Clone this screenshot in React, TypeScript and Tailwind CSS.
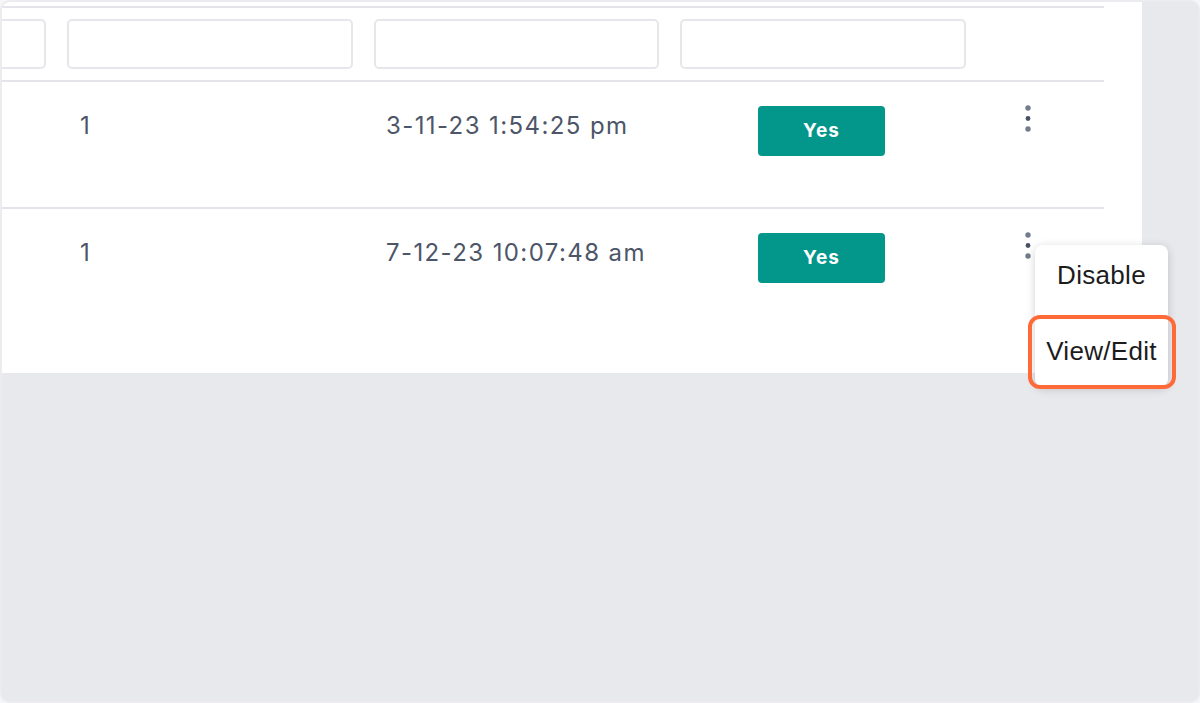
const cols = ['w-[55px]', 'w-[306px]', 'w-[307px]', 'w-[306px]', 'w-[128px]'];

const rows = [
  { count: '1', date: '3-11-23 1:54:25 pm', active: true, h: 'h-[127px]' },
  { count: '1', date: '7-12-23 10:07:48 am', active: true, h: 'h-[162px]' },
];

const KebabIcon = () => (
  <svg width="8" height="30" viewBox="0 0 8 30" className="block">
    <circle cx="4" cy="4" r="2.7" fill="#727c8c" />
    <circle cx="4" cy="14.5" r="2.4" fill="#465163" />
    <circle cx="4" cy="25" r="2.7" fill="#727c8c" />
  </svg>
);

const FilterInput = () => (
  <div className="h-[50px] w-full rounded-[5px] border-2 border-[#e5e7eb] bg-white" />
);

export default function App() {
  return (
    <div className="h-[703px] w-[1200px] bg-[#f6f6f9]">
      <div className="relative h-full w-full overflow-hidden rounded-[10px] border-2 border-[#ebebf0] bg-[#e8e9ed]">
        {/* table panel */}
        <div className="h-[371px] w-[1140px] overflow-hidden bg-white pr-[38px] pt-[4px] font-['Inter',sans-serif]">
          <div className="border-t-2 border-[#e3e5ea]">
            {/* filter row */}
            <div className="flex h-[74px] items-center border-b-2 border-[#e3e5ea]">
              <div className={`${cols[0]} flex shrink-0 justify-end pr-[11px]`}>
                <div className="w-[286px] shrink-0">
                  <FilterInput />
                </div>
              </div>
              <div className={`${cols[1]} shrink-0 px-[10px]`}>
                <FilterInput />
              </div>
              <div className={`${cols[2]} shrink-0 px-[11px]`}>
                <FilterInput />
              </div>
              <div className={`${cols[3]} shrink-0 px-[10px]`}>
                <FilterInput />
              </div>
              <div className={`${cols[4]} shrink-0`} />
            </div>

            {rows.map((row, i) => (
              <div
                key={i}
                className={`flex items-start ${row.h} ${
                  i < rows.length - 1 ? 'border-b-2 border-[#e3e5ea]' : ''
                } text-[24px] leading-[32px] tracking-[1.4px] text-[#4d5668]`}
              >
                <div className={`${cols[0]} shrink-0`} />
                <div className={`${cols[1]} shrink-0 pl-[23px] pt-[28px]`}>{row.count}</div>
                <div className={`${cols[2]} shrink-0 pl-[23px] pt-[28px]`}>{row.date}</div>
                <div className={`${cols[3]} flex shrink-0 justify-center pr-[3px] pt-[24px]`}>
                  {row.active && (
                    <span className="flex h-[50px] w-[127px] items-center justify-center rounded-[4px] bg-[#03968a] text-[19px] font-bold tracking-[1px] text-white">
                      Yes
                    </span>
                  )}
                </div>
                <div className={`${cols[4]} shrink-0 pl-[48px] pt-[22px]`}>
                  <KebabIcon />
                </div>
              </div>
            ))}
          </div>
        </div>

        {/* open row menu */}
        <div className="absolute left-[1033px] top-[243px] flex h-[142px] w-[133px] flex-col items-center rounded-[8px] bg-white pt-[15px] font-['Liberation_Sans',Arial,sans-serif] text-[26px] leading-[30px] tracking-[0.3px] text-[#1c1c1c] shadow-[0_2px_10px_rgba(0,0,0,0.18)]">
          <span>Disable</span>
          <span className="mt-[46px]">View/Edit</span>
        </div>

        {/* highlight */}
        <div className="absolute left-[1026px] top-[313px] h-[74px] w-[148px] rounded-[12px] border-4 border-[#ff6a38]" />
      </div>
    </div>
  );
}
